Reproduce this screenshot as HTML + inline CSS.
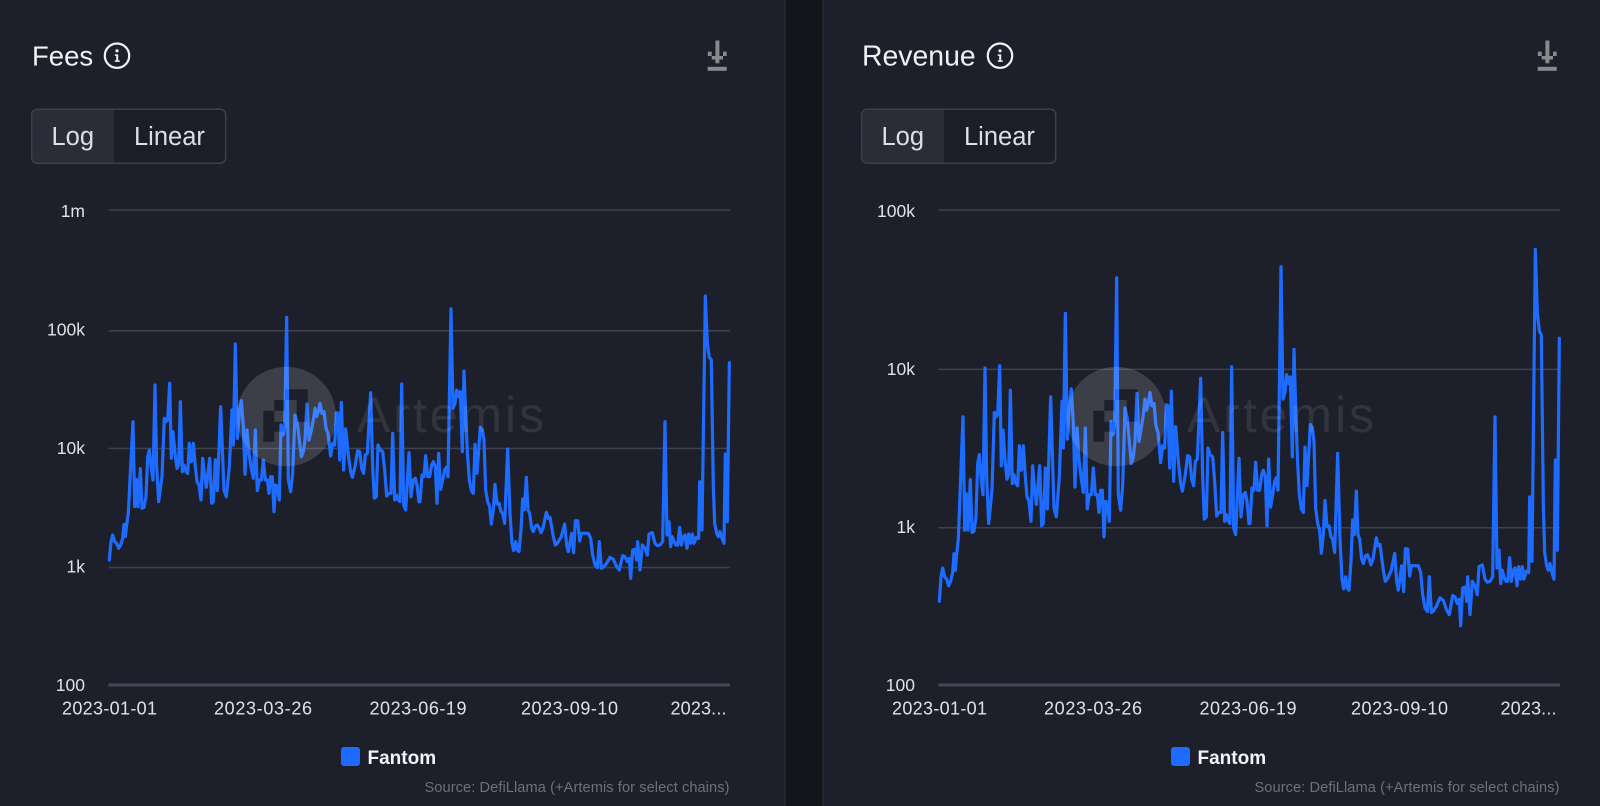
<!DOCTYPE html>
<html><head><meta charset="utf-8"><title>Fees and Revenue</title>
<style>
html,body{margin:0;padding:0;background:#14141b;width:1600px;height:806px;overflow:hidden}
svg{display:block}
text{font-family:"Liberation Sans",Arial,sans-serif}
.title{font-size:27.5px;fill:#f1f1f3}
.tg{font-size:25.5px;fill:#dedfe3}
.y{font-size:17.5px;fill:#e2e2e5;text-anchor:end}
.x{font-size:18px;fill:#e2e2e5}
.lg{font-size:19px;font-weight:700;fill:#f4f4f6}
.src{font-size:14.6px;fill:#6f7078}
.grid{fill:#3f414c}
.axis{fill:#464855}
.ln{fill:none;stroke:#1d6cff;stroke-linejoin:round;stroke-linecap:round;stroke-width:3.2px;vector-effect:non-scaling-stroke}
</style></head><body>
<svg width="1600" height="806" viewBox="0 0 1600 806" xmlns="http://www.w3.org/2000/svg">
<defs>
<g id="series">
<polyline class="ln" points="28,840 33,785 38,765 44,785 50,790 56,805 62,795 68,775 72,733 76,770 80,735 85,700 90,600 99,425 104,680 109,598 114,680 121,566 126,685 132,682 138,650 143,530 148,510 153,560 159,600 165,315 170,560 176,665 186,590 193,415 198,425 203,420 209,310 214,535 219,455 225,520 231,565 236,555 241,365 247,575 252,555 258,575 263,580 268,490 274,545 280,490 286,560 291,605 297,615 303,660 308,535 314,590 319,622 329,535 335,670 340,665 346,540 352,632 362,380 372,630 379,650 388,560 396,390 400,495 406,192 412,475 418,400 424,362 430,440 435,583 441,450 447,520 453,560 460,595 466,450 472,632 478,600 484,600 490,540 496,600 502,600 507,640 512,590 517,590 522,695 527,615 532,620 538,660 543,435 549,465 554,440 560,112 565,600 572,635 578,580 585,405 592,430 598,480 604,530 610,515 615,480 621,372 627,480 634,450 640,420 645,385 650,410 655,395 660,370 666,400 672,395 678,445 684,460 692,528 698,490 704,495 709,398 714,400 719,540 724,367 731,570 737,447 745,525 752,575 757,592 765,560 773,512 779,515 785,565 791,580 796,525 802,520 812,338 818,560 823,655 829,650 834,495 840,510 848,515 854,570 860,648 866,640 873,640 878,460 884,660 889,645 895,660 900,665 905,312 911,675 917,690 927,518 933,650 940,600 946,595 951,615 957,665"/>
<polyline class="ln" transform="translate(960 0)" points="-3,665 0,665 6,585 12,590 17,527 23,590 29,590 35,555 40,545 46,560 51,670 56,520 62,628 68,600 74,570 79,562 84,590 93,87 99,385 105,370 110,330 116,350 121,335 127,515 132,273 138,430 143,530 148,600 154,632 160,640 165,493 171,580 181,442 187,450 192,480 197,630 203,665 209,680 214,732 220,690 225,613 231,672 237,670 243,695 248,700 254,730 263,507 270,700 276,790 281,812 287,785 292,810 297,815 303,750 308,657 313,690 319,592 324,690 329,700 335,745 340,755 346,738 352,735 358,745 363,758 369,745 379,697 384,715 390,712 400,770 406,795 412,790 424,770 434,732 440,795 445,815 455,760 461,818 466,722 473,722 479,783 484,760 505,760 512,775 518,825 525,855 532,863 538,785 544,865 550,862 560,850 570,832 580,838 590,860 598,870 608,827 615,830 622,845 628,835 632,895 638,810 645,808 650,840 653,785 660,870 667,795 675,805 682,825 687,762 697,758 705,790 712,797 720,795 728,785 735,425 741,765 747,725 752,800 757,770 762,785 768,795 773,795 779,742 784,795 790,770 795,765 801,805 806,762 812,790 817,762 822,790 829,772 836,775 839,605 846,750 856,48 862,190 868,232 874,240 880,620 884,730 890,760 895,770 900,755 906,775 912,790 916,522 922,725 928,248"/>
</g>
<g id="chrome">
<path d="M715.400 40.500h4v15.500h3.600v-4.400h3.700v4.400h-3.700v3.500h-3.600v3.800h-4v-3.800h-3.700v-3.500h-3.900v-4.400h3.900v4.400h3.700z" fill="#8a8a8a"/>
<rect x="707.700" y="66.800" width="19" height="4" fill="#8a8a8a"/>
<rect x="31.700" y="109.200" width="194" height="54" rx="5.500" fill="#1c1d28" stroke="#3d3f4b" stroke-width="1.500"/>
<path d="M37 110h77v52.500h-77a4.500 4.500 0 0 1 -4.500 -4.500v-43.500a4.500 4.500 0 0 1 4.500 -4.500z" fill="#2a2c38"/>
<text class="tg" x="51.500" y="145">Log</text>
<text class="tg" x="134" y="145">Linear</text>
<rect class="axis" x="108.500" y="683.500" width="621.500" height="3"/>
<text class="x" x="62" y="714.500" textLength="95" lengthAdjust="spacing">2023-01-01</text>
<text class="x" x="214" y="714.500" textLength="98" lengthAdjust="spacing">2023-03-26</text>
<text class="x" x="369.500" y="714.500" textLength="97" lengthAdjust="spacing">2023-06-19</text>
<text class="x" x="521" y="714.500" textLength="97" lengthAdjust="spacing">2023-09-10</text>
<text class="x" x="670.500" y="714.500" textLength="56" lengthAdjust="spacing">2023...</text>
<rect x="341" y="747" width="19" height="19" rx="3" fill="#1d6cff"/>
<text class="lg" x="367.500" y="764">Fantom</text>
<text class="src" x="424.500" y="792" textLength="305" lengthAdjust="spacing">Source: DefiLlama (+Artemis for select chains)</text>
</g>
<g id="info">
<circle cx="117" cy="55.700" r="12.200" fill="none" stroke="#f1f1f3" stroke-width="2.200"/>
<circle cx="117" cy="50.800" r="1.600" fill="#f1f1f3"/>
<path d="M114.800 54.400h3.400v6h1.600v1.500h-5v-1.500h1.400v-4.500h-1.400z" fill="#f1f1f3"/>
</g>
<g id="mark">
<path fill="#fff" fill-opacity=".14" fill-rule="evenodd" d="M236.600 416.500a49.700 49.700 0 1 0 99.400 0a49.700 49.700 0 1 0 -99.400 0zM263.300 410.700h11v31h-11zM274.300 400h10.700v10.700h-10.700zM285 389.300h22.700v32.400h-11v-21.700h-11.700zM274.300 421.700h10.700v10h-10.700z"/>
<text x="357" y="432" font-size="50" fill="#fff" fill-opacity=".09" textLength="187" lengthAdjust="spacing">Artemis</text>
</g>
</defs>

<rect x="0" y="0" width="785" height="806" fill="#1d1f2a"/>
<rect x="784.500" y="0" width="1" height="806" fill="#2e3039"/>
<rect x="823" y="0" width="777" height="806" fill="#1d1f2a"/>
<rect x="822.500" y="0" width="1" height="806" fill="#2e3039"/>

<!-- Fees -->
<text class="title" x="32" y="65.500">Fees</text>
<use href="#info"/>
<use href="#chrome"/>
<rect class="grid" x="108.500" y="209.300" width="621.500" height="1.500"/>
<rect class="grid" x="108.500" y="330" width="621.500" height="1.500"/>
<rect class="grid" x="108.500" y="447.700" width="621.500" height="1.500"/>
<rect class="grid" x="108.500" y="566.800" width="621.500" height="1.500"/>
<text class="y" x="85" y="217">1m</text>
<text class="y" x="85" y="335.500">100k</text>
<text class="y" x="85" y="454">10k</text>
<text class="y" x="85" y="572.500">1k</text>
<text class="y" x="85" y="691">100</text>
<use href="#series" transform="matrix(.33333 0 0 .33333 100 280)"/>
<use href="#mark"/>

<!-- Revenue -->
<text class="title" x="862" y="65.500" style="font-size:28.400px">Revenue</text>
<use href="#info" transform="translate(883 0)"/>
<use href="#chrome" transform="translate(830 0)"/>
<g transform="translate(830 0)">
<rect class="grid" x="108.500" y="209.300" width="621.500" height="1.500"/>
<rect class="grid" x="108.500" y="368.600" width="621.500" height="1.500"/>
<rect class="grid" x="108.500" y="527" width="621.500" height="1.500"/>
<text class="y" x="85" y="217">100k</text>
<text class="y" x="85" y="375">10k</text>
<text class="y" x="85" y="533">1k</text>
<text class="y" x="85" y="691">100</text>
</g>
<use href="#series" transform="matrix(.33333 0 0 .44444 930 228)"/>
<use href="#mark" transform="translate(830 0)"/>
</svg>
</body></html>
